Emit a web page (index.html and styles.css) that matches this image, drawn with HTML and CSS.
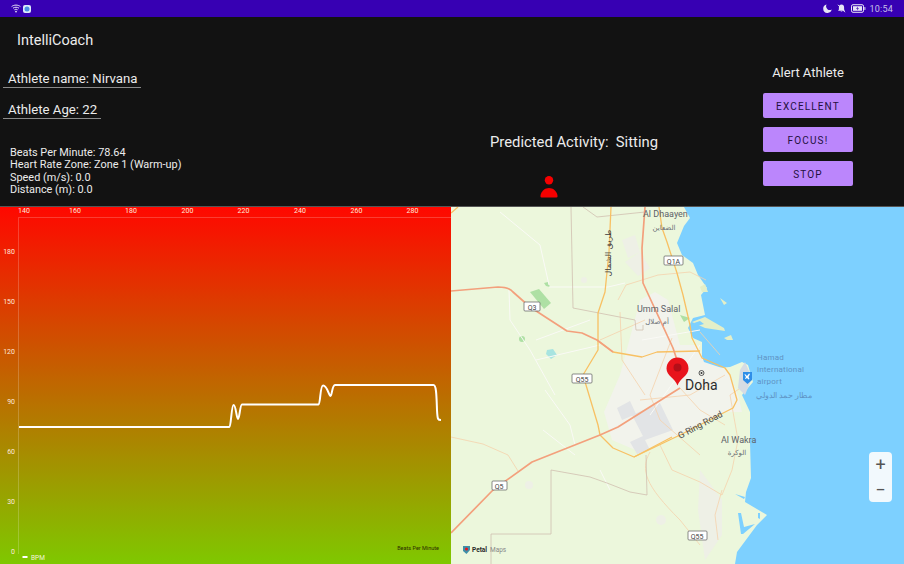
FILE: index.html
```html
<!DOCTYPE html>
<html lang="en">
<head>
<meta charset="utf-8">
<title>IntelliCoach</title>
<link rel="stylesheet" href="styles.css">
</head>
<body>
<div class="app">
  <div class="statusbar">
    <div class="status-group">
      <svg class="ico-wifi" viewBox="0 0 10 9"><path class="st-line" d="M.6 2.600C3 .6 7 .6 9.400 2.600M2 4.200c1.700-1.300 4.300-1.300 6 0M3.400 5.800c1-.7 2.200-.7 3.200 0"/><circle class="st-fill" cx="5" cy="7.600" r=".9"/></svg>
      <svg class="ico-app" viewBox="0 0 8 8"><rect class="app-bg" width="8" height="8" rx="2"/><circle class="app-dot" cx="4" cy="4" r="2.500"/></svg>
    </div>
    <div class="status-group">
      <svg class="ico-moon" viewBox="0 0 9 9"><path class="st-fill" d="M3.600.4A4.300 4.300 0 1 0 8.700 5.600 3.800 3.800 0 0 1 3.600.4z"/></svg>
      <svg class="ico-bell" viewBox="0 0 9 9"><path class="st-fill" d="M4.500.6c-1.700 0-2.600 1.300-2.600 2.900v2L1 6.800h7L7.100 5.500v-2C7.100 1.900 6.200.6 4.500.6zM3.600 7.400h1.800c0 .9-1.800.9-1.800 0z"/><path class="st-cut" d="M1 .8l7 7.400"/></svg>
      <svg class="ico-batt" viewBox="0 0 15 9"><rect class="st-line" x=".5" y=".7" width="12" height="7.600" rx="1.500"/><rect class="st-fill" x="13.400" y="3" width="1" height="3" rx=".5"/><rect class="st-fill" x="2" y="2.200" width="9" height="4.600"/><path class="batt-bolt" d="M7 2.600L5 4.700h1.500L6 6.400l2-2.100H6.500z"/></svg>
      <span class="clock">10:54</span>
    </div>
  </div>

  <header class="header">
    <section class="col-info">
      <h1 class="title">IntelliCoach</h1>
      <div class="field field-name">Athlete name: Nirvana</div>
      <div class="field field-age">Athlete Age: 22</div>
      <div class="stats">
        <div>Beats Per Minute: 78.64</div>
        <div>Heart Rate Zone: Zone 1 (Warm-up)</div>
        <div>Speed (m/s): 0.0</div>
        <div>Distance (m): 0.0</div>
      </div>
    </section>
    <section class="col-activity">
      <div class="activity">Predicted Activity:&nbsp; Sitting</div>
      <svg class="ico-person" viewBox="0 0 18 22"><circle class="person" cx="9" cy="4.200" r="4.200"/><path class="person" d="M1.500 21.500C.2 21.500.4 20 .6 19 1.500 14.800 5 12 9 12s7.500 2.800 8.400 7c.2 1 .4 2.500-.9 2.500z"/></svg>
    </section>
    <section class="col-alert">
      <div class="alert-title">Alert Athlete</div>
      <button class="btn">EXCELLENT</button>
      <button class="btn">FOCUS!</button>
      <button class="btn">STOP</button>
    </section>
  </header>

  <main class="panels">
    <div class="chart">
      <svg class="chart-svg" viewBox="0 0 451 357">
        <path class="axis" d="M18.500 10.500H451M18.500 10.500V347"/>
        <g class="x-labels">
          <text x="24" y="6">140</text><text x="75" y="6">160</text><text x="131" y="6">180</text><text x="187.500" y="6">200</text><text x="243.500" y="6">220</text><text x="300" y="6">240</text><text x="356.500" y="6">260</text><text x="412.500" y="6">280</text>
        </g>
        <g class="y-labels">
          <text x="15" y="47">180</text><text x="15" y="97">150</text><text x="15" y="147">120</text><text x="15" y="197">90</text><text x="15" y="247">60</text><text x="15" y="297">30</text><text x="15" y="347">0</text>
        </g>
        <path class="bpm-line" d="M19 220H229.500C231 220 231.500 198 233.500 198C236 198 236.500 212 238 212C239.500 212 240 197.500 242 197.500H318.500C320.500 197.500 320 178.500 323 178.500C327 178 329 189 330.500 189C332 189 332 178 335 178H433.500C436.500 178 436.500 190 437 203C437.500 213 438 213 441 213"/>
        <rect class="legend-key" x="22.500" y="349" width="5" height="2"/>
        <text class="legend" x="31" y="353">BPM</text>
        <text class="desc" x="439" y="343">Beats Per Minute</text>
      </svg>
    </div>
    <div class="map">
      <svg class="map-svg" viewBox="451 207 453 357">
        <rect class="land" x="451" y="207" width="453" height="357"/>
        <path class="sea" d="M684 207L690 218 684 226 677 243 682 255 693 263 698 275 707 288 701 295 703 305 705 315 693 318 688 328 693 338 702 342 702 355 700 362 707 367 717 368 730 367 742 362 748 365 753 382 742 395 750 412 750 442 751 478 746 492 745 502 767 515 757 525 737 552 735 564H904V207z"/>
        <path class="urban" d="M640 300L655 292 668 300 680 345 698 345 704 362 728 370 738 395 742 412 726 412 690 430 640 452 612 440 604 412 620 375 628 345z"/>
        <path class="urban-soft" d="M625 262L640 252 650 268 638 276zM700 470L722 500 722 535 705 560 698 510zM622 240L635 235 640 252 628 258z"/>
        <path class="urban-dark" d="M617 408L630 401 636 414 622 420zM632 415L660 403 673 430 645 440zM630 442L643 436 650 450 637 454z"/>
        <circle class="urban-soft" cx="529" cy="485" r="4"/><circle class="urban-soft" cx="661" cy="520" r="5"/><circle class="urban-soft" cx="584" cy="280" r="3"/>
        <path class="park" d="M530 292L539 289 551 303 544 309z"/>
        <path class="park" d="M544 283L548 282 550 287 546 286z M519 339a3 3 0 1 0 6 0 3 3 0 1 0-6 0z M680 315L690 318 684 322z"/>
        <path class="pond" d="M547 350L553 349 557 355 551 359 546 354z"/>
        <path class="track" d="M500 212L540 245 549 285M549 287H608L625 283M509 290L510 320 530 350M530 350L555 395M536 340L590 320M536 360L600 345M543 430L575 455M545 390L570 425 575 445M600 470L610 490M642 340L700 330M650 415L700 345"/>
        <path class="minor" d="M451 437L483 444 508 455 518 471M618 300L626 285 658 275 690 272 706 280M620 312L622 360 645 395M672 338L650 395 660 420 700 455M700 332L720 355M650 452C640 470 645 485 680 520L700 545M660 445L672 470 700 482 722 495M722 490L715 515 718 540M745 385L730 395 738 440 732 470 722 495M680 388L700 410 725 425M640 400L690 395 725 375M600 340L645 320"/>
        <path class="boundary" d="M571 207L573 308 635 320 636 330H643V325M583 207L597 217 645 212M491 564V534H551V470L590 477 607 483 630 492 647 495 646 455"/>
        <path class="road-yellow" d="M611 207L609 252 605 292 598 313 598 350 583 375 598 425 600 435 613 448 634 457 680 435 733 408 737 400 730 375 725 368 702 358 692 338 690 325 683 295 677 273 667 242 662 228 659 207"/>
        <path class="road-yellow" d="M597 340L613 352 642 357 657 352 700 351M634 457L672 437M451 213L458 207"/>
        <path class="road-orange" d="M451 291L498 287C505 287 510 288 513 292L530 307 550 320 567 331 582 333 597 340 613 352"/>
        <path class="road-orange" d="M645 207L642 248 643 283 673 348 677 360"/>
        <path class="road-orange" d="M451 533L493 490 532 462 600 435 618 427 680 388"/>
        <path class="islands" d="M720 298L727 303 724 305z M692 322L705 317 724 328 725 331 705 328z M724 338L731 335 733 340 727 340z M700 287L705 284 708 292 702 292z"/>
        <path class="sea" d="M694 323L700 321 704 324 697 326z M738 513L741 513 744 527 755 524 743 534 741 534z M758 513L760 513 760 519 758 518z M735 494L745 497 744 499z"/>
        <path class="runway" d="M740 370L745 362 752 378 745 395 738 388z"/>

        <g class="shield"><rect x="524" y="302" width="16" height="9" rx="1"/><text x="532" y="310">Q3</text></g>
        <g class="shield"><rect x="572" y="374" width="20" height="9" rx="1"/><text x="582" y="382">Q55</text></g>
        <g class="shield"><rect x="664" y="256" width="19" height="9" rx="1"/><text x="673.500" y="264">Q1A</text></g>
        <g class="shield"><rect x="688" y="531" width="19" height="9" rx="1"/><text x="697" y="539">Q55</text></g>
        <g class="shield"><rect x="492" y="481" width="15" height="9" rx="1"/><text x="499" y="489">Q5</text></g>

        <text class="label" x="643" y="217">Al Dhaayen</text>
        <text class="label-ar" x="664" y="230">الضعاين</text>
        <text class="label" x="637" y="312">Umm Salal</text>
        <text class="label-ar" x="657" y="324">أم صلال</text>
        <text class="label-ar road-ar" transform="translate(611 253) rotate(-90)">طريق الشمال</text>
        <text class="label-doha" x="685" y="390">Doha</text>
        <text class="label g-ring" transform="translate(680 439) rotate(-28)">G Ring Road</text>
        <text class="label" x="721" y="443">Al Wakra</text>
        <text class="label-ar" x="737" y="455">الوكرة</text>
        <text class="label-air" x="757" y="360">Hamad</text>
        <text class="label-air" x="757" y="372">international</text>
        <text class="label-air" x="757" y="384">airport</text>
        <text class="label-air" x="756" y="398">مطار حمد الدولي</text>

        <circle class="poi-ring" cx="701.500" cy="373" r="2.500"/><circle class="poi-dot" cx="701.500" cy="373" r="1"/>
        <path class="air-shield" d="M743 372h9v8l-4.500 4-4.500-4z"/>
        <path class="air-plane" d="M745 374l2 2 2-2.500 1 .5-1.500 3 1 2-1 .5-1.500-1.500-1.500 1-.5-.5 1-1.500-1.500-2.500z"/>
        <path class="pin" d="M677.500 385.500C675 378 666.500 376 666.500 368.500a11 11 0 0 1 22 0c0 7.500-8.500 9.500-11 17z"/>
        <circle class="pin-in" cx="677.500" cy="367.500" r="4"/>

        <path class="petal-bg" d="M463 546h7v4l-3.500 4-3.500-3z"/>
        <circle class="pin" cx="466.500" cy="549" r="1.500"/>
        <text class="petal-a" x="472" y="552">Petal</text>
        <text class="petal-b" x="490" y="552">Maps</text>
      </svg>
      <div class="zoom">
        <button class="zoom-btn">+</button>
        <button class="zoom-btn">−</button>
      </div>
    </div>
  </main>
</div>
</body>
</html>
```
FILE: styles.css
```css
* { box-sizing: border-box; }
html, body { margin: 0; padding: 0; }
body { width: 904px; height: 564px; overflow: hidden; background: #121212; font-family: "Roboto", "Liberation Sans", sans-serif; color: #ececec; }
.app { display: flex; flex-direction: column; height: 564px; }

.statusbar { height: 17px; background: #3700b3; display: flex; justify-content: space-between; align-items: center; padding: 0 11px; }
.status-group { display: flex; align-items: center; gap: 2px; }
.status-group svg { display: block; }
.ico-wifi { width: 10px; height: 9px; }
.ico-app { width: 8px; height: 8px; }
.ico-moon { width: 9px; height: 9px; margin-right: 3px; }
.ico-bell { width: 9px; height: 9px; margin-right: 3px; }
.ico-batt { width: 15px; height: 9px; margin-right: 2px; }
.st-line { fill: none; stroke: #e8e4f6; stroke-width: 1; }
.st-fill { fill: #e8e4f6; }
.st-cut { stroke: #e8e4f6; stroke-width: 1; fill: none; }
.batt-bolt { fill: #3700b3; }
.app-bg { fill: #dbeafb; }
.app-dot { fill: #4a90e2; }
.clock { font-size: 9px; line-height: 10px; color: #c9c0e8; letter-spacing: .2px; }

.header { height: 190px; display: flex; background: #121212; border-bottom: 1px solid #555; }
.col-info { width: 482px; }
.title { margin: 16px 0 0 17px; font-size: 14.500px; line-height: 16px; font-weight: 400; color: #ececec; }
.field { margin-left: 3px; padding: 0 0 1px 5px; font-size: 13.200px; line-height: 15px; border-bottom: 1px solid #8a8a8a; color: #ececec; white-space: nowrap; }
.field-name { width: 138px; margin-top: 22px; }
.field-age { width: 98px; margin-top: 14px; }
.stats { margin: 28px 0 0 10px; font-size: 10.900px; line-height: 12.300px; color: #ececec; }

.col-activity { width: 280px; display: flex; flex-direction: column; }
.activity { margin: 116px 0 0 8px; font-size: 14.800px; line-height: 18px; white-space: nowrap; color: #ececec; }
.ico-person { width: 18px; height: 22px; margin: 25px 0 0 58px; }
.person { fill: #f50000; }

.col-alert { width: 90px; margin-left: 1px; display: flex; flex-direction: column; align-items: center; padding-top: 47px; }
.alert-title { font-size: 13px; line-height: 16px; margin: 1px 0 12px; color: #ececec; white-space: nowrap; }
.btn { width: 90px; height: 25px; margin: 0 0 9px; border: 0; padding: 1px 0 0; background: #bb86fc; border-radius: 2px; color: #24103f; font-family: inherit; font-size: 10px; letter-spacing: 1.150px; font-weight: 400; }

.panels { height: 357px; display: flex; }
.chart { width: 451px; height: 357px; background: linear-gradient(180deg, #ff0800 0%, #7fc800 100%); }
.chart-svg { display: block; width: 451px; height: 357px; }
.axis { fill: none; stroke: #fff; stroke-opacity: .2; stroke-width: 1; }
.x-labels text { font: 7px "Roboto", sans-serif; fill: #ffe9dc; text-anchor: middle; }
.y-labels text { font: 7px "Roboto", sans-serif; fill: #ffe9dc; text-anchor: end; }
.bpm-line { fill: none; stroke: #fff; stroke-width: 2; stroke-linejoin: round; }
.legend-key { fill: #fff; }
.legend { font: 6.500px "Roboto", sans-serif; fill: #f0f5d8; }
.desc { font: 5.500px "Roboto", sans-serif; fill: #2c2c00; text-anchor: end; }

.map { position: relative; width: 453px; height: 357px; }
.map-svg { display: block; width: 453px; height: 357px; }
.land { fill: #ecf7dc; }
.sea { fill: #7dd0ff; }
.urban { fill: #f2f3ec; }
.urban-soft { fill: #eef0e6; }
.urban-dark { fill: #e2e4e6; }
.park { fill: #aee0a4; }
.pond { fill: #a8e4e0; }
.islands { fill: #e4efc8; }
.runway { fill: #d6dce4; }
.track { fill: none; stroke: #fafaf6; stroke-width: 1; }
.minor { fill: none; stroke: #f5d2ac; stroke-width: .8; }
.boundary { fill: none; stroke: #d0bfb0; stroke-width: .8; }
.road-yellow { fill: none; stroke: #f8c063; stroke-width: 1.300; stroke-linejoin: round; }
.road-orange { fill: none; stroke: #f3a07c; stroke-width: 1.700; stroke-linejoin: round; }
.shield rect { fill: #fff; stroke: #5a5a5a; stroke-width: .7; }
.shield text { font: 7px "Roboto", sans-serif; fill: #444; text-anchor: middle; }
.label { font: 9px "Roboto", sans-serif; fill: #5d6268; }
.label-ar { font: 7px "DejaVu Sans", sans-serif; fill: #6a6f74; text-anchor: middle; }
.road-ar { font-size: 8px; fill: #3c3c3c; text-anchor: middle; }
.label-doha { font: 14px "Roboto", sans-serif; fill: #2b2b2b; }
.g-ring { font-size: 9px; fill: #4a4a4a; }
.label-air { font: 8px "Roboto", sans-serif; fill: #5f93c4; letter-spacing: .2px; }
.poi-ring { fill: none; stroke: #333; stroke-width: .8; }
.poi-dot { fill: #333; }
.air-shield { fill: #2f8ee8; }
.air-plane { fill: #fff; }
.pin { fill: #e8141c; }
.pin-in { fill: #b40f18; }
.petal-bg { fill: #3f8fa8; }
.petal-a { font: bold 6.500px "Roboto", sans-serif; fill: #2a2a2a; }
.petal-b { font: 6.500px "Roboto", sans-serif; fill: #888; }

.zoom { position: absolute; left: 418px; top: 245px; width: 23px; height: 50px; background: #f2f9fd; border-radius: 4px; display: flex; flex-direction: column; }
.zoom-btn { height: 25px; border: 0; padding: 0; background: none; font: 400 18px/25px "Roboto", sans-serif; color: #555; }
```
